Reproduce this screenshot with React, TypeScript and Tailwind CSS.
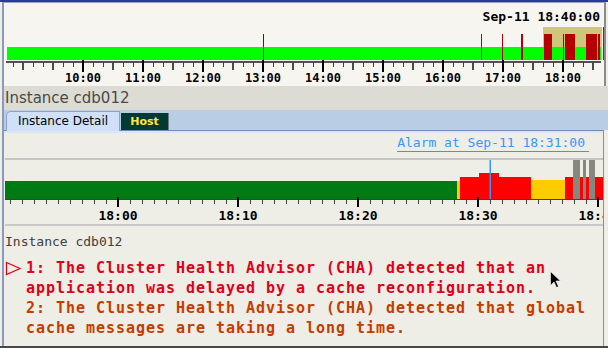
import React from "react";

const MONO = "font-['DejaVu_Sans_Mono',monospace]";

function TopChart() {
  const ticks: React.ReactNode[] = [];
  for (let x = 13; x <= 593; x += 10) {
    const d = x - 23;
    if (d % 60 === 0 && x !== 23) {
      ticks.push(<rect key={x} x={x - 1} y={60} width={2} height={12} fill="#000" />);
    } else if (d % 30 === 0) {
      ticks.push(<rect key={x} x={x - 1} y={62} width={2} height={8} fill="#4a4a4a" />);
    } else {
      ticks.push(<rect key={x} x={x} y={62} width={1} height={5} fill="#404040" />);
    }
  }
  const hours = ["10:00", "11:00", "12:00", "13:00", "14:00", "15:00", "16:00", "17:00", "18:00"];
  const reds: [number, number][] = [
    [481, 1],
    [502, 1],
    [521, 2],
    [544, 8],
    [563, 1],
    [565, 10],
    [586, 11],
    [598, 2],
  ];
  return (
    <svg width={600} height={61} viewBox="4 25 600 61" className="block">
      <rect x={543} y={27} width={59} height={33} fill="#cdc67b" />
      <rect x={7} y={47} width={594} height={13} fill="#00ff00" />
      <rect x={263} y={34} width={1} height={26} fill="#8b0000" />
      {reds.map(([x, w]) => (
        <rect key={x} x={x} y={34} width={w} height={26} fill="#b40000" />
      ))}
      <rect x={603} y={27} width={1} height={33} fill="#404040" />
      <rect x={6} y={61} width={595} height={2} fill="#505050" />
      {ticks}
      {hours.map((h, i) => (
        <text
          key={h}
          x={83 + i * 60}
          y={82}
          textAnchor="middle"
          fontFamily="DejaVu Sans Mono, monospace"
          fontWeight="bold"
          fontSize={12}
          fill="#000"
        >
          {h}
        </text>
      ))}
    </svg>
  );
}

function DetailChart() {
  const ticks: React.ReactNode[] = [];
  for (let x = 10; x <= 598; x += 12) {
    if ((x - 118) % 120 === 0) {
      ticks.push(<rect key={x} x={x - 1} y={197} width={2} height={10} fill="#000" />);
    } else {
      ticks.push(<rect key={x} x={x} y={200} width={1} height={4} fill="#404040" />);
    }
  }
  const labels = ["18:00", "18:10", "18:20", "18:30", "18:40"];
  return (
    <svg width={599} height={64} viewBox="4 160 599 64" className="block">
      <rect x={5} y={181} width={452} height={18} fill="#007a12" />
      <rect x={457} y={181} width={3} height={18} fill="#ffcc00" />
      <rect x={460} y={177} width={71} height={22} fill="#ff0000" />
      <rect x={479} y={173} width={20} height={26} fill="#ff0000" />
      <rect x={531} y={180} width={34} height={19} fill="#ffcc00" />
      <rect x={565} y={177} width={40} height={22} fill="#ff0000" />
      <rect x={573} y={159} width={7} height={40} fill="#878780" />
      <rect x={583} y={159} width={3} height={40} fill="#878780" />
      <rect x={589} y={159} width={6} height={40} fill="#878780" />
      <rect x={489.5} y={159} width={1.5} height={40} fill="#3399ff" />
      <rect x={5} y={199} width={600} height={1} fill="#404040" />
      {ticks}
      {labels.map((l, i) => (
        <text
          key={l}
          x={118 + i * 120}
          y={220}
          textAnchor="middle"
          fontFamily="DejaVu Sans Mono, monospace"
          fontWeight="bold"
          fontSize={13}
          fill="#000"
        >
          {l}
        </text>
      ))}
    </svg>
  );
}

export default function App() {
  return (
    <div className="w-[608px] h-[348px] bg-[#eeede6] flex flex-col overflow-hidden relative">
      <div className="h-[2px] shrink-0 bg-[#2b3a9a]" />
      <div className="flex-1 min-h-0 flex flex-col ml-[2px] border-l-2 border-[#8a9abc]">
        {/* top overview panel */}
        <div className="h-[84px] shrink-0 mr-[2px] bg-[#f6f5ef] border-t border-t-[#9aa4bc] border-r-2 border-r-[#8c8c8c] flex flex-col">
          <div className={`h-[22px] pt-[6px] pr-[4px] text-right text-[13px] leading-[16px] font-bold text-black ${MONO}`}>
            Sep-11 18:40:00
          </div>
          <TopChart />
        </div>

        {/* title bar */}
        <div className="h-[24px] shrink-0 bg-[#dcdcd4] pl-[1px] text-[15px] leading-[24px] text-[#4a4a4a] font-['DejaVu_Sans',sans-serif]">
          Instance cdb012
        </div>

        {/* tabs */}
        <div className="h-[20px] shrink-0 bg-[#b9cde5] flex items-end relative z-10 font-['DejaVu_Sans',sans-serif]">
          <div className="ml-[2px] w-[114px] h-[20px] -mb-[1px] bg-[#d0e0f8] border border-b-0 border-[#8aa2cc] rounded-tl-[5px] text-center text-[12px] leading-[18px] text-black">
            Instance Detail
          </div>
          <div className="ml-[1px] w-[48px] h-[17px] bg-[#003a30] border-r border-[#6c7c80] text-center text-[11px] leading-[17px] font-bold text-[#ffe640]">
            Host
          </div>
        </div>

        {/* detail panel */}
        <div className="flex-1 min-h-0 mr-[4px] border-t border-[#7088b8] border-r border-r-[#7a90bc] flex flex-col">
          <div className="h-[2px] shrink-0 bg-[#dbe5f3]" />
          <div className="h-[25px] shrink-0 flex justify-end items-start pt-[2px] pr-[14px]">
            <span className={`inline-block pr-[4px] text-[13px] leading-[16px] text-[#3399ff] border-b border-[#3399ff] ${MONO}`}>
              Alarm at Sep-11 18:31:00
            </span>
          </div>
          <div className="h-[2px] shrink-0 ml-[1px] bg-[#c4c4c4]" />
          <DetailChart />
          <div className="h-[2px] shrink-0 ml-[1px] bg-[#c8c8c8]" />
          <div className="flex-1 pl-[1px] pt-[8px]">
            <div className={`text-[13px] leading-[16px] text-[#404040] ${MONO}`}>Instance cdb012</div>
            <div className="mt-[8px] flex">
              <svg width={21} height={20} className="block shrink-0">
                <polygon points="1.5,4.5 15,10.5 1.5,16.5" fill="none" stroke="#e0001a" strokeWidth={1.2} />
              </svg>
              <div className={`text-[15px] leading-[20px] font-bold tracking-[0.97px] whitespace-pre ${MONO}`}>
                <div className="text-[#e0001a]">1: The Cluster Health Advisor (CHA) detected that an</div>
                <div className="text-[#e0001a]">application was delayed by a cache reconfiguration.</div>
                <div className="text-[#c43c00]">2: The Cluster Health Advisor (CHA) detected that global</div>
                <div className="text-[#c43c00]">cache messages are taking a long time.</div>
              </div>
            </div>
          </div>
        </div>
      </div>
      <div className="h-[2px] shrink-0 bg-[#484848]" />

      {/* mouse cursor */}
      <svg width={12} height={18} className="absolute left-[550px] top-[271px]">
        <path d="M0.5,0.5 L0.5,14.5 L4,11 L6.5,16.5 L8.5,15.5 L6,10 L10.5,10 Z" fill="#000" stroke="#fff" strokeWidth={0.6} />
      </svg>
    </div>
  );
}
